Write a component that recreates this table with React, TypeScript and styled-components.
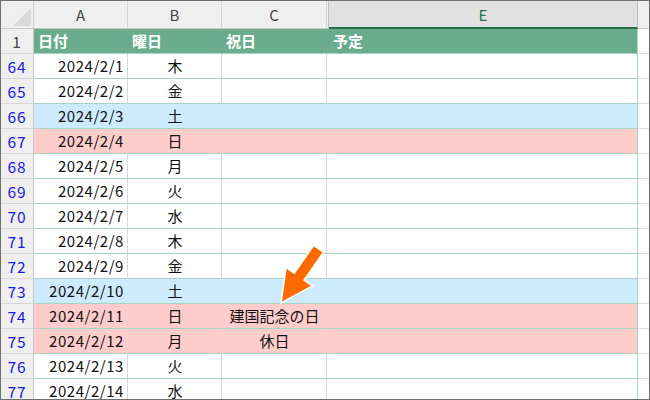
import React from "react";
import styled, { createGlobalStyle, css } from "styled-components";

const Global = createGlobalStyle`
  html, body { margin: 0; padding: 0; background: #ffffff; }
  body { font-family: "Noto Sans CJK JP", "Noto Sans", sans-serif; }
`;

type Tone = "white" | "blue" | "pink";

interface DayRow {
  n: number;
  date: string;
  wd: string;
  holiday?: string;
  tone: Tone;
}

const rows: DayRow[] = [
  { n: 64, date: "2024/2/1", wd: "木", tone: "white" },
  { n: 65, date: "2024/2/2", wd: "金", tone: "white" },
  { n: 66, date: "2024/2/3", wd: "土", tone: "blue" },
  { n: 67, date: "2024/2/4", wd: "日", tone: "pink" },
  { n: 68, date: "2024/2/5", wd: "月", tone: "white" },
  { n: 69, date: "2024/2/6", wd: "火", tone: "white" },
  { n: 70, date: "2024/2/7", wd: "水", tone: "white" },
  { n: 71, date: "2024/2/8", wd: "木", tone: "white" },
  { n: 72, date: "2024/2/9", wd: "金", tone: "white" },
  { n: 73, date: "2024/2/10", wd: "土", tone: "blue" },
  { n: 74, date: "2024/2/11", wd: "日", holiday: "建国記念の日", tone: "pink" },
  { n: 75, date: "2024/2/12", wd: "月", holiday: "休日", tone: "pink" },
  { n: 76, date: "2024/2/13", wd: "火", tone: "white" },
  { n: 77, date: "2024/2/14", wd: "水", tone: "white" },
];

const fills: Record<Tone, string> = {
  white: "#ffffff",
  blue: "#cdebfd",
  pink: "#ffcccc",
};

const Frame = styled.div`
  position: relative;
  width: 650px;
  height: 400px;
  box-sizing: border-box;
  border: 1px solid #6f6f6f;
  overflow: hidden;
  background: #ffffff;
`;

const Line = styled.div<{ $h: number }>`
  display: grid;
  grid-template-columns: 33px 94px 94px 105px 2px 309px 1fr;
  height: ${(p) => p.$h}px;
`;

const Corner = styled.div`
  background: #efefef;
  border-right: 1px solid #d0d0d0;
  border-bottom: 1px solid #c8c8c8;
  box-sizing: border-box;
  display: flex;
  align-items: flex-end;
  justify-content: flex-end;
  padding: 0 2px 2px 0;
`;

const Triangle = styled.div`
  width: 0;
  height: 0;
  border-left: 18px solid transparent;
  border-bottom: 18px solid #d9d9d9;
`;

const ColHead = styled.div<{ $active?: boolean; $hidden?: boolean }>`
  box-sizing: border-box;
  background: ${(p) => (p.$active ? "#e1e1e1" : "#efefef")};
  border-right: 1px solid ${(p) => (p.$active ? "#bdbdbd" : "#d5d5d5")};
  border-bottom: ${(p) => (p.$active ? "2px solid #217346" : "1px solid #c8c8c8")};
  display: flex;
  align-items: center;
  justify-content: center;
  font-size: 15px;
  color: ${(p) => (p.$active ? "#217346" : "#444444")};
  ${(p) =>
    p.$hidden &&
    css`
      border-right: 1px solid #c0c0c0;
    `}
`;

const RowNum = styled.div<{ $plain?: boolean }>`
  box-sizing: border-box;
  background: #efefef;
  border-right: 1px solid #c8c8c8;
  border-bottom: 1px solid #d5d5d5;
  display: flex;
  align-items: center;
  justify-content: center;
  font-size: 15.5px;
  letter-spacing: 0.8px;
  color: ${(p) => (p.$plain ? "#444444" : "#1a1ae6")};
  padding-bottom: 1px;
`;

const HeadCell = styled.div<{ $last?: boolean }>`
  box-sizing: border-box;
  background: #6aad8e;
  border-bottom: 1px solid #a9d3c1;
  border-right: 1px solid ${(p) => (p.$last ? "#a9d3c1" : "#6aad8e")};
  color: #ffffff;
  font-weight: 700;
  font-size: 15px;
  display: flex;
  align-items: center;
  padding: 0 0 1px 4px;
  white-space: nowrap;
`;

const Cell = styled.div<{
  $tone: Tone;
  $align?: "left" | "center" | "right";
  $digits?: boolean;
  $last?: boolean;
}>`
  box-sizing: border-box;
  background: ${(p) => fills[p.$tone]};
  border-bottom: 1px solid #a9d3c1;
  border-right: 1px solid
    ${(p) => (p.$last ? "#a9d3c1" : p.$tone === "white" ? "#d9d9d9" : fills[p.$tone])};
  font-size: 15px;
  letter-spacing: ${(p) => (p.$digits ? "0.55px" : "0")};
  color: #111111;
  display: flex;
  align-items: center;
  justify-content: ${(p) =>
    p.$align === "right" ? "flex-end" : p.$align === "center" ? "center" : "flex-start"};
  padding: 0 3px 1px 4px;
  white-space: nowrap;
  overflow: visible;
`;

const Spare = styled.div<{ $head?: boolean }>`
  box-sizing: border-box;
  background: ${(p) => (p.$head ? "#efefef" : "#ffffff")};
  border-bottom: 1px solid ${(p) => (p.$head ? "#c8c8c8" : "#dcdcdc")};
`;

const ArrowLayer = styled.svg`
  position: absolute;
  left: 0;
  top: 0;
  pointer-events: none;
`;

function arrowPoints(): string {
  const tip = { x: 280, y: 302 };
  const dx = -36;
  const dy = 52;
  const len = Math.hypot(dx, dy);
  const d = { x: dx / len, y: dy / len };
  const nrm = { x: -d.y, y: d.x };
  const total = 66;
  const headLen = 32;
  const headHalf = 16;
  const shaftHalf = 6;
  const base = { x: tip.x - headLen * d.x, y: tip.y - headLen * d.y };
  const tail = { x: tip.x - total * d.x, y: tip.y - total * d.y };
  const p = (c: { x: number; y: number }, k: number) =>
    `${(c.x + nrm.x * k).toFixed(1)},${(c.y + nrm.y * k).toFixed(1)}`;
  return [
    `${tip.x},${tip.y}`,
    p(base, headHalf),
    p(base, shaftHalf),
    p(tail, shaftHalf),
    p(tail, -shaftHalf),
    p(base, -shaftHalf),
    p(base, -headHalf),
  ].join(" ");
}

export default function App() {
  return (
    <>
      <Global />
      <Frame>
        <Line $h={28}>
          <Corner>
            <Triangle />
          </Corner>
          <ColHead>A</ColHead>
          <ColHead>B</ColHead>
          <ColHead>C</ColHead>
          <ColHead $hidden />
          <ColHead $active>E</ColHead>
          <Spare $head />
        </Line>
        <Line $h={25}>
          <RowNum $plain>1</RowNum>
          <HeadCell>日付</HeadCell>
          <HeadCell>曜日</HeadCell>
          <HeadCell>祝日</HeadCell>
          <HeadCell />
          <HeadCell $last>予定</HeadCell>
          <Spare />
        </Line>
        {rows.map((r) => (
          <Line $h={25} key={r.n}>
            <RowNum>{r.n}</RowNum>
            <Cell $tone={r.tone} $align="right" $digits>
              {r.date}
            </Cell>
            <Cell $tone={r.tone} $align="center">
              {r.wd}
            </Cell>
            <Cell $tone={r.tone} $align="center">
              {r.holiday ?? ""}
            </Cell>
            <Cell $tone={r.tone} />
            <Cell $tone={r.tone} $last />
            <Spare />
          </Line>
        ))}
        <ArrowLayer width="650" height="400" viewBox="0 0 650 400">
          <polygon
            points={arrowPoints()}
            fill="#ff6a00"
            stroke="#ffffff"
            strokeWidth="1.5"
            strokeLinejoin="miter"
          />
        </ArrowLayer>
      </Frame>
    </>
  );
}
